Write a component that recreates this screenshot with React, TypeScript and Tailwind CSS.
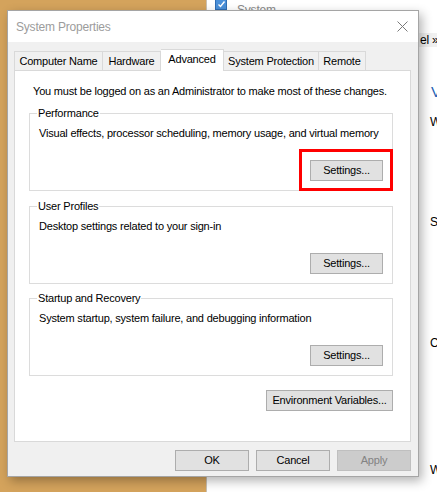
import React from "react";

function Btn({ children, className = "", disabled = false }: { children: React.ReactNode; className?: string; disabled?: boolean }) {
  return (
    <div
      className={
        "h-[21px] flex items-center justify-center border text-[11px] leading-none " +
        (disabled ? "bg-[#cccccc] border-[#bfbfbf] text-[#838383] " : "bg-[#e1e1e1] border-[#adadad] text-black ") +
        className
      }
    >
      {children}
    </div>
  );
}

function GroupBox({ label, desc, highlight = false }: { label: string; desc: string; highlight?: boolean }) {
  return (
    <div className="relative h-[78px] border border-[#dcdcdc] flex flex-col">
      <div className="absolute left-[7px] top-[-8px] bg-white px-[1px] leading-[14px]">{label}</div>
      <div className="pl-[9px] pt-[11px] leading-[16px]">{desc}</div>
      <div className="flex justify-end pr-[9px] mt-[19px]">
        <Btn className="w-[73px]">Settings...</Btn>
      </div>
      {highlight && (
        <div className="absolute right-[-1px] bottom-[-1px] w-[94px] h-[42px] border-[3px] border-[#ff0000]" />
      )}
    </div>
  );
}

export default function App() {
  return (
    <div className="relative w-[437px] h-[492px] overflow-hidden flex font-['Liberation_Sans',Arial,sans-serif] tracking-[-0.2px]">
      {/* desktop */}
      <div className="w-[207px] h-full bg-[#d4a35c] border-r border-[#c9c0b2]" />
      {/* explorer window behind */}
      <div className="relative flex-1 h-full bg-white">
        <div className="absolute left-[8px] top-[-2px] w-[12px] h-[12px] bg-[#4a90d9] border border-[#2e6db3] flex items-center justify-center">
          <svg width="9" height="9" viewBox="0 0 9 9">
            <path d="M1.5 4.5 L3.5 6.5 L7.5 1.5" stroke="white" strokeWidth="1.4" fill="none" />
          </svg>
        </div>
        <div className="absolute left-[30px] top-[4px] text-[12px] text-[#8a8a8a] leading-none">System</div>
        <div className="absolute left-[210px] top-[33px] w-[40px] h-[14px] bg-[#f0f0f0] text-[12px] leading-[14px] text-black pl-[3px]">el »</div>
        <div className="absolute left-[224px] top-[84px] text-[15px] leading-none text-[#1e5fb4]">View</div>
        <div className="absolute left-[223px] top-[116px] text-[12px] leading-none text-black">Windows</div>
        <div className="absolute left-[223px] top-[216px] text-[12px] leading-none text-black">System</div>
        <div className="absolute left-[223px] top-[337px] text-[12px] leading-none text-black">Computer</div>
        <div className="absolute left-[223px] top-[464px] text-[12px] leading-none text-black">Windows</div>
      </div>

      {/* dialog */}
      <div className="absolute left-[7px] top-[10px] w-[412px] h-[467px] border border-[#a5a5a5] bg-[#f0f0f0] flex flex-col shadow-[3px_4px_10px_rgba(0,0,0,0.3)] text-[11px] text-black">
        <div className="h-[31px] bg-white flex items-center justify-between pl-[8px] pr-[10px] shrink-0">
          <span className="text-[12px] text-[#9c9c9c] tracking-[-0.2px]">System Properties</span>
          <svg width="11" height="11" viewBox="0 0 11 11">
            <path d="M0.5 0.5 L10.5 10.5 M10.5 0.5 L0.5 10.5" stroke="#7a7a7a" strokeWidth="1" fill="none" />
          </svg>
        </div>
        <div className="flex flex-col pl-[6px] pr-[7px] pt-[7px]">
          <div className="flex items-end h-[21px]">
            <div className="w-[89px] h-[19px] border border-b-0 border-[#d9d9d9] bg-[#f0f0f0] flex items-center justify-center">Computer Name</div>
            <div className="w-[58px] h-[19px] border-t border-r border-[#d9d9d9] bg-[#f0f0f0] flex items-center justify-center">Hardware</div>
            <div className="relative z-10 w-[63px] h-[22px] mb-[-1px] border-t border-r border-[#d9d9d9] bg-white flex items-center justify-center pb-[3px]">Advanced</div>
            <div className="w-[95px] h-[19px] border-t border-r border-[#d9d9d9] bg-[#f0f0f0] flex items-center justify-center">System Protection</div>
            <div className="w-[47px] h-[19px] border-t border-r border-[#d9d9d9] bg-[#f0f0f0] flex items-center justify-center">Remote</div>
          </div>
          <div className="h-[372px] border border-[#d9d9d9] bg-white flex flex-col pl-[14px] pr-[17px] pt-[12px]">
            <div className="pl-[4px] leading-[16px]">You must be logged on as an Administrator to make most of these changes.</div>
            <div className="mt-[14px]">
              <GroupBox label="Performance" desc="Visual effects, processor scheduling, memory usage, and virtual memory" highlight />
            </div>
            <div className="mt-[15px]">
              <GroupBox label="User Profiles" desc="Desktop settings related to your sign-in" />
            </div>
            <div className="mt-[14px]">
              <GroupBox label="Startup and Recovery" desc="System startup, system failure, and debugging information" />
            </div>
            <div className="flex justify-end mt-[14px]">
              <Btn className="w-[127px]">Environment Variables...</Btn>
            </div>
          </div>
          <div className="flex justify-end gap-[7px] mt-[8px]">
            <Btn className="w-[74px]">OK</Btn>
            <Btn className="w-[74px]">Cancel</Btn>
            <Btn className="w-[74px]" disabled>Apply</Btn>
          </div>
        </div>
      </div>
    </div>
  );
}
